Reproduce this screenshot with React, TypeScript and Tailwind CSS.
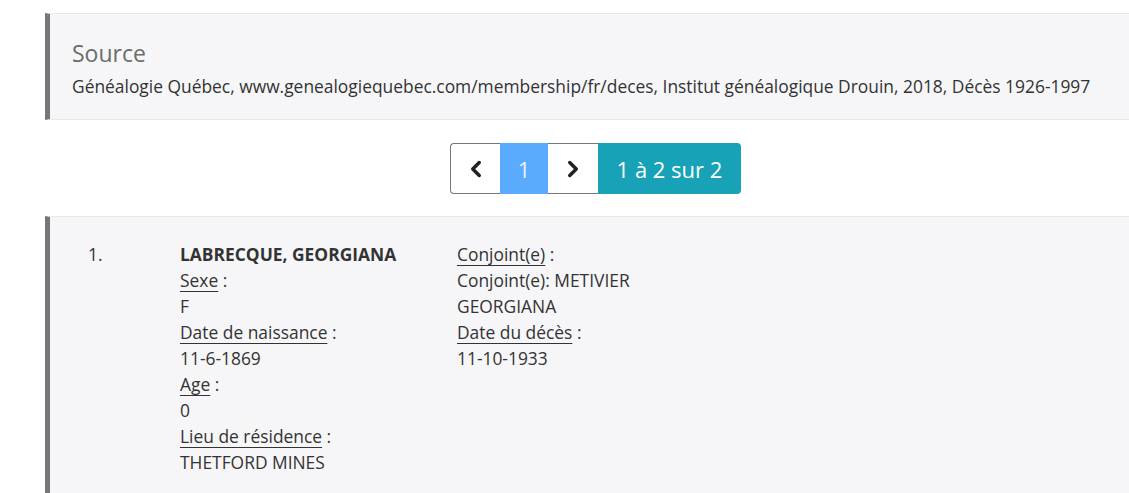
import React from 'react';
import { ChevronLeft, ChevronRight } from 'lucide-react';

const font = { fontFamily: '"Open Sans", "Noto Sans", sans-serif' };

const Label = ({ children }: { children: React.ReactNode }) => (
  <div>
    <span className="underline decoration-1 underline-offset-[4px]">{children}</span> :
  </div>
);

export default function App() {
  return (
    <div className="min-h-[493px] bg-white text-[#333] text-[17.4px] leading-[26px]" style={font}>
      <div className="pt-[13px] pl-[45px]">
        {/* source block */}
        <div className="bg-[#f6f6f8] border-l-[5px] border-[#777] border-t border-t-[#e8e8ea] border-b border-b-[#e8e8ea] h-[107px] pl-[22px] pt-[23px]">
          <h3 className="text-[23px] leading-[32px] text-[#6c6c6c]">Source</h3>
          <p className="mt-[4px] whitespace-nowrap">
            Généalogie Québec, www.genealogiequebec.com/membership/fr/deces, Institut généalogique Drouin, 2018, Décès 1926-1997
          </p>
        </div>

        {/* pagination */}
        <div className="flex justify-center pl-[17px] pt-[23px] pb-[22px]">
          <div className="flex h-[51px]">
            <button className="w-[50px] flex items-center justify-center border border-[#777] border-r-0 rounded-l-[4px] bg-white text-[#222]">
              <ChevronLeft className="w-[26px] h-[26px]" strokeWidth={3.2} />
            </button>
            <div className="w-[48px] flex items-center justify-center bg-[#5aabfd] text-[#e6f2ff] text-[22px]">1</div>
            <button className="w-[50px] flex items-center justify-center border-y border-[#777] bg-white text-[#222]">
              <ChevronRight className="w-[26px] h-[26px]" strokeWidth={3.2} />
            </button>
            <div className="w-[143px] flex items-center justify-center bg-[#17a2b8] text-white text-[22px] rounded-r-[4px]">
              1 à 2 sur 2
            </div>
          </div>
        </div>

        {/* record block */}
        <div className="bg-[#f6f6f8] border-l-[5px] border-[#777] border-t border-t-[#e8e8ea] min-h-[277px] pt-[24px] pl-[38px]">
          <div className="flex">
            <div className="w-[92px]">1.</div>
            <div className="w-[277px]">
              <div className="font-bold">LABRECQUE, GEORGIANA</div>
              <Label>Sexe</Label>
              <div>F</div>
              <Label>Date de naissance</Label>
              <div>11-6-1869</div>
              <Label>Age</Label>
              <div>0</div>
              <Label>Lieu de résidence</Label>
              <div>THETFORD MINES</div>
            </div>
            <div className="w-[190px]">
              <Label>Conjoint(e)</Label>
              <div>Conjoint(e): METIVIER GEORGIANA</div>
              <Label>Date du décès</Label>
              <div>11-10-1933</div>
            </div>
          </div>
        </div>
      </div>
    </div>
  );
}
